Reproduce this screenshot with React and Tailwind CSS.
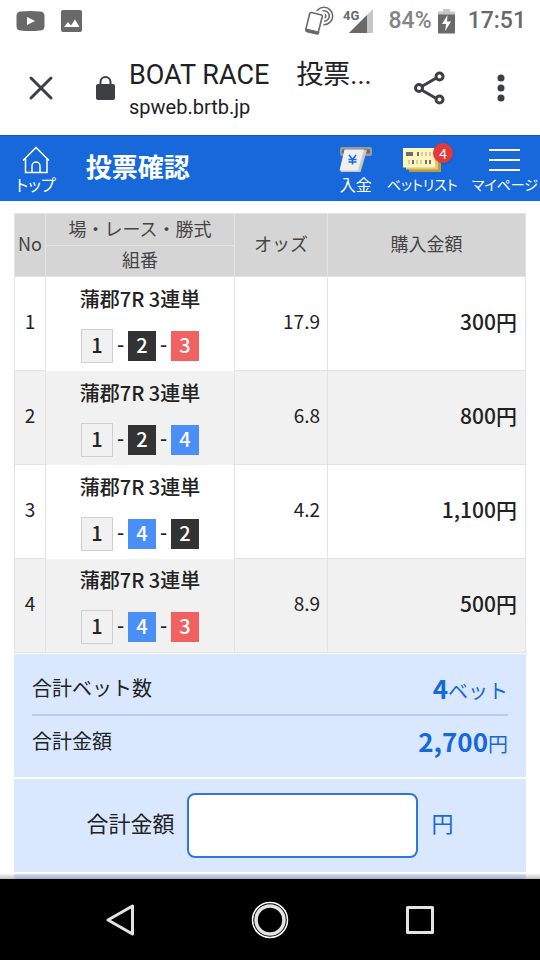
const bets = [
  { no: 1, race: '蒲郡7R 3連単', boats: [1, 2, 3], odds: '17.9', amount: '300' },
  { no: 2, race: '蒲郡7R 3連単', boats: [1, 2, 4], odds: '6.8', amount: '800' },
  { no: 3, race: '蒲郡7R 3連単', boats: [1, 4, 2], odds: '4.2', amount: '1,100' },
  { no: 4, race: '蒲郡7R 3連単', boats: [1, 4, 3], odds: '8.9', amount: '500' },
];

const boatStyles = {
  1: 'h-[34px] w-8 border border-[#cfcfcf] bg-[#f1f1f1] text-[#222]',
  2: 'h-[30px] w-7 bg-[#333] text-white',
  3: 'h-[30px] w-7 bg-[#f26161] text-white',
  4: 'h-[30px] w-7 bg-[#498ff5] text-white',
};

function StatusBar() {
  return (
    <div className="flex h-[42px] shrink-0 items-center pr-[14px] pl-4 font-[Roboto,sans-serif] text-[23px] font-medium">
      <svg className="mr-4 h-5 w-[29px]" viewBox="0 0 29 20">
        <path d="M5 .5Q14.5-.5 24 .5Q28.5.5 28.5 5v10q0 4.500-4.500 4.500-9.500 1-19 0Q.5 19.500.5 15V5Q.5.5 5 .5Z" fill="#696969" />
        <path d="m11 6 8 4-8 4Z" fill="#fff" />
      </svg>
      <svg className="h-[22px] w-[21px]" viewBox="0 0 21 22">
        <rect width="21" height="22" rx="2" fill="#696969" />
        <path d="m3 17 4-5 3 3.500 4-6L18.500 17Z" fill="#fff" />
      </svg>
      <div className="flex-1" />
      <svg className="mr-2 h-[30px] w-[31px]" viewBox="0 0 31 30" fill="none" stroke="#696969">
        <circle cx="20" cy="10" r="8.700" strokeWidth="1.500" />
        <circle cx="20" cy="10" r="5.300" strokeWidth="1.600" />
        <circle cx="20" cy="10" r="2.500" fill="#696969" stroke="none" />
        <path d="M5 7 18 4l3 5-2 12H8Z" fill="#fff" stroke="none" />
        <path d="M7.500 6.500 17.500 9q1 .3.8 1.500L14.200 26.500q-.4 1.500-1.900 1.200L3 25.500q-1.500-.4-1.200-1.800L5.600 7.700q.4-1.500 1.900-1.200Z" strokeWidth="1.600" fill="#fff" />
        <path d="m2.300 23 12.700 3-.8 2.200-11.200-2.500Z" fill="#696969" />
      </svg>
      <svg className="mr-4 h-6 w-[30px]" viewBox="0 0 30 24">
        <path d="M30 0v24H6Z" fill="#c6c6c6" />
        <path d="M24 6V24H6Z" fill="#696969" />
        <path d="M0 0h17v12H0Z" fill="#fff" />
        <text x="0" y="11" fontSize="13" fontWeight="700" fill="#696969">4G</text>
      </svg>
      <span className="mr-[6px] text-[#858585]">84%</span>
      <svg className="mr-[13px] h-[25px] w-[17px]" viewBox="0 0 17 25">
        <path d="M5 0h7v2.500h5V6H0V2.500h5Z" fill="#c6c6c6" />
        <path d="M0 5.500h17V23.500q0 1-1 1H1q-1 0-1-1Z" fill="#696969" />
        <path d="M9.500 6 4 15h4l-.8 7L13 12.500H9Z" fill="#fff" />
      </svg>
      <span className="text-[#696969]">17:51</span>
    </div>
  );
}

function BrowserBar() {
  return (
    <div className="flex h-[93px] shrink-0 items-center pr-[35px] pb-[2px] pl-7 font-[Roboto,'Noto_Sans_CJK_JP',sans-serif] text-[#202124]">
      <button type="button" aria-label="閉じる" className="mr-[42px]">
        <svg className="h-[26px] w-[26px]" viewBox="0 0 26 26" stroke="#3c4043" strokeWidth="3" strokeLinecap="round">
          <path d="m3 3 20 20M23 3 3 23" />
        </svg>
      </button>
      <svg className="mr-[14px] h-6 w-[19px]" viewBox="0 0 19 24">
        <rect x="0" y="8" width="19" height="16" rx="2" fill="#3c4043" />
        <path d="M4.500 9V6a5 5 0 0 1 10 0v3" fill="none" stroke="#3c4043" strokeWidth="2" />
      </svg>
      <div className="min-w-0 flex-1 pt-[6px]">
        <div className="text-[27px] leading-8 whitespace-nowrap">BOAT RACE　投票...</div>
        <div className="text-[20px] leading-8">spweb.brtb.jp</div>
      </div>
      <button type="button" aria-label="共有" className="mr-[52px]">
        <svg className="h-[34px] w-[31px]" viewBox="0 0 31 34" fill="none" stroke="#3c4043" strokeWidth="3">
          <path d="M8.500 15 21.500 7.500M8.500 19.500l13 7.500" />
          <circle cx="5" cy="17" r="3.500" />
          <circle cx="25.500" cy="5.500" r="3.500" />
          <circle cx="25.500" cy="28.500" r="3.500" />
        </svg>
      </button>
      <button type="button" aria-label="メニュー">
        <svg className="h-7 w-[8px]" viewBox="0 0 8 28" fill="#3c4043">
          <circle cx="4" cy="4" r="3.500" />
          <circle cx="4" cy="14" r="3.500" />
          <circle cx="4" cy="24" r="3.500" />
        </svg>
      </button>
    </div>
  );
}

function NavItem({ label, small, children }) {
  return (
    <a href="#" className="flex flex-col items-center pt-[9px] whitespace-nowrap">
      <span className="relative flex h-[29px] items-center">{children}</span>
      <span className={`leading-5 [font-feature-settings:'palt'] ${small ? 'text-[14px]' : 'text-[16px]'}`}>{label}</span>
    </a>
  );
}

function SiteHeader() {
  return (
    <header className="flex h-[66px] shrink-0 items-start border-t border-[#1458b8] bg-[#1768db] pr-[2px] pl-4 text-white">
      <NavItem label="トップ">
        <svg className="h-7 w-7" viewBox="0 0 28 28" fill="none" stroke="#fff" strokeWidth="1.500">
          <path d="M1 14.500 14 1.500l13 13M3.500 12.500v14H25v-14M10 26.500V20a4 4 0 0 1 8 0v6.500" />
        </svg>
      </NavItem>
      <h1 className="ml-[30px] flex-1 pt-[11px] text-[26px] leading-[38px] font-bold">投票確認</h1>
      <nav className="flex gap-[14px]">
        <NavItem label="入金">
          <svg className="h-7 w-[34px]" viewBox="0 0 34 28">
            <rect x="1" y="1" width="32" height="9" rx="2" fill="#9b9b9b" />
            <rect x="3" y="3.500" width="28" height="4" fill="#6a6a6a" />
            <path d="M8 4h20l-6.500 22H1.500Z" fill="#c8c8c8" />
            <path d="M5.500 3.500H25L19 24.500H0.500Z" fill="#efefef" />
            <path d="m10 9 3.500 4.500L17 9M9.500 13.500h8M9.500 16h8M13.500 13v5.500" fill="none" stroke="#1768db" strokeWidth="1.500" />
          </svg>
        </NavItem>
        <NavItem label="ベットリスト" small>
          <svg className="h-[26px] w-[38px]" viewBox="0 0 38 26">
            <path d="M6 7h32v18H6Z" fill="#b69c45" />
            <path d="M3 4h32v18.500H3Z" fill="#dfc971" />
            <path d="M0 1h32v19.500H0Z" fill="#fff5bd" />
            <path d="M3 5h7v4H3ZM14 5h2v4h-2ZM9 13h2v4H9ZM22 13h2v4h-2ZM26 13h2v4h-2Z" fill="#6e6e6e" />
            <path d="M18 5h2v4h-2ZM22 5h2v4h-2ZM26 5h2v4h-2ZM5 13h2v4H5ZM13 13h2v4h-2ZM17 13h2v4h-2Z" fill="#d9cd93" />
          </svg>
          <span className="absolute -top-[2px] -right-3 flex size-5 items-center justify-center rounded-full bg-[#e5383b] text-[14px] leading-5 shadow-sm">4</span>
        </NavItem>
        <NavItem label="マイページ" small>
          <svg className="h-6 w-[31px]" viewBox="0 0 31 24" stroke="#fff" strokeWidth="2">
            <path d="M0 2h31M0 12h31M0 22h31" />
          </svg>
        </NavItem>
      </nav>
    </header>
  );
}

function Boats({ boats }) {
  return (
    <div className="flex h-[34px] items-center justify-center text-[20px] leading-none font-medium">
      {boats.map((boat, index) => (
        <span key={boat} className="flex items-center">
          {index > 0 && <span className="w-[15px] pb-1 text-center">-</span>}
          <span className={`flex items-center justify-center pb-[2px] ${boatStyles[boat]}`}>{boat}</span>
        </span>
      ))}
    </div>
  );
}

function BetTable() {
  return (
    <table className="w-full table-fixed border-collapse border border-[#e3e3e3] text-[19px] leading-6">
      <colgroup>
        <col className="w-[31px]" />
        <col className="w-[189px]" />
        <col className="w-[93px]" />
        <col />
      </colgroup>
      <thead className="bg-[#d5d5d5] text-[18px] text-[#444]">
        <tr className="h-8">
          <th rowSpan={2} className="border border-[#e3e3e3] pb-1 font-normal">No</th>
          <th className="border border-[#e3e3e3] pb-1 font-normal">場・レース・勝式</th>
          <th rowSpan={2} className="border border-[#e3e3e3] pb-1 font-normal">オッズ</th>
          <th rowSpan={2} className="border border-[#e3e3e3] pb-1 font-normal">購入金額</th>
        </tr>
        <tr className="h-[31px]">
          <th className="border border-[#e3e3e3] pb-1 font-normal">組番</th>
        </tr>
      </thead>
      <tbody>
        {bets.map((bet) => (
          <tr key={bet.no} className="h-[94px] even:bg-[#f1f1f1]">
            <td className="border border-[#e3e3e3] pb-[6px] text-center">{bet.no}</td>
            <td className="border-x border-[#e3e3e3]">
              <div className="mb-4 text-center text-[20px] leading-7 font-medium">{bet.race}</div>
              <Boats boats={bet.boats} />
            </td>
            <td className="border border-[#e3e3e3] pr-[7px] pb-[6px] text-right">{bet.odds}</td>
            <td className="border border-[#e3e3e3] pr-2 pb-[6px] text-right text-[21px] font-medium">{bet.amount}円</td>
          </tr>
        ))}
      </tbody>
    </table>
  );
}

function Totals() {
  return (
    <dl className="mt-px bg-[#d9e8ff] px-[18px] pt-[9px] pb-[10px] text-[20px]">
      <div className="flex h-[53px] items-center justify-between border-b-2 border-[#b1cdf8] pb-[2px]">
        <dt>合計ベット数</dt>
        <dd className="text-[#1768db]"><span className="text-[26px] font-bold">4</span>ベット</dd>
      </div>
      <div className="flex h-[51px] items-center justify-between pb-[2px]">
        <dt>合計金額</dt>
        <dd className="text-[#1768db]"><span className="text-[26px] font-bold">2,700</span>円</dd>
      </div>
    </dl>
  );
}

function AndroidNav() {
  return (
    <nav className="flex h-[81px] shrink-0 items-center justify-center gap-[112px] bg-black">
      <button type="button" aria-label="戻る">
        <svg className="h-10 w-[38px]" viewBox="0 0 38 40" fill="none" stroke="#e3e3e3" strokeWidth="3" strokeLinejoin="round">
          <path d="M31.500 6v28L7 20Z" />
        </svg>
      </button>
      <button type="button" aria-label="ホーム">
        <svg className="h-10 w-[38px]" viewBox="0 0 38 40" fill="none" stroke="#e3e3e3">
          <circle cx="19" cy="20" r="17.500" strokeWidth="1.500" stroke="#fff" />
          <circle cx="19" cy="20" r="14" strokeWidth="3.500" />
        </svg>
      </button>
      <button type="button" aria-label="履歴">
        <svg className="h-10 w-[38px]" viewBox="0 0 38 40" fill="none" stroke="#e3e3e3" strokeWidth="3" strokeLinejoin="round">
          <rect x="6.500" y="7.500" width="25" height="25" />
        </svg>
      </button>
    </nav>
  );
}

function App() {
  return (
    <div className="flex h-screen flex-col bg-white font-['Noto_Sans_CJK_JP',sans-serif] text-[#222]">
      <StatusBar />
      <BrowserBar />
      <SiteHeader />
      <div className="relative min-h-0 flex-1 overflow-hidden">
        <main className="px-[14px] pt-3">
          <BetTable />
          <Totals />
          <div className="mt-[2px] flex h-[93px] items-center justify-center bg-[#d9e8ff] text-[22px]">
            <label htmlFor="total" className="pb-[6px]">合計金額</label>
            <input id="total" type="text" inputMode="numeric" className="mr-[14px] ml-3 h-[65px] w-[231px] rounded-lg border-2 border-[#2d76df] bg-white px-3" />
            <span className="pb-[6px] text-[#1768db]">円</span>
          </div>
          <div className="mt-[2px] h-[60px] bg-[#d9e8ff]" />
        </main>
        <div className="absolute inset-x-0 bottom-0 h-[6px] bg-linear-to-b from-transparent to-black/25" />
      </div>
      <AndroidNav />
    </div>
  );
}

export default App;
